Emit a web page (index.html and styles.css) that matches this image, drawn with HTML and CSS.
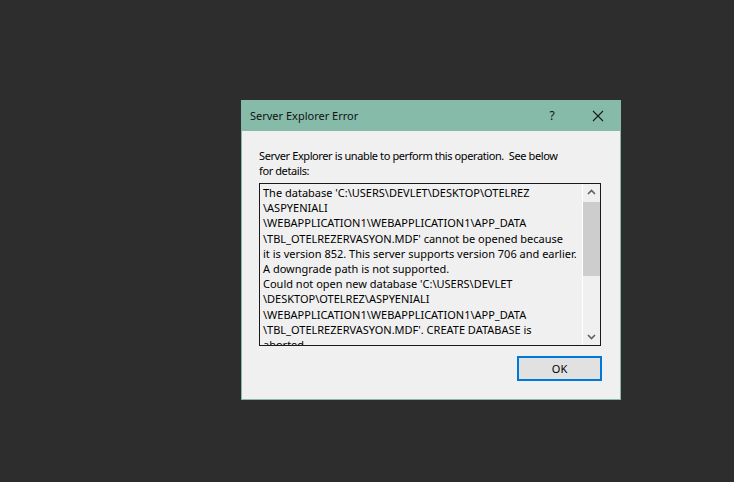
FILE: index.html
```html
<!DOCTYPE html>
<html>
<head>
<meta charset="utf-8">
<link rel="stylesheet" href="styles.css">
</head>
<body>
<div class="desk">
  <div class="dialog">
    <div class="titlebar">
      <span class="title">Server Explorer Error</span>
      <span class="help">?</span>
      <svg class="close" width="12" height="12" viewBox="0 0 12 12"><path d="M1 1L11 11M11 1L1 11" stroke="#1a1a1a" stroke-width="1.1" fill="none"/></svg>
    </div>
    <div class="body">
      <div class="msg">
        <div>Server Explorer is unable to perform this operation.&nbsp; See below</div>
        <div>for details:</div>
      </div>
      <div class="box">
        <div class="text">
          <div>The database 'C:\USERS\DEVLET\DESKTOP\OTELREZ</div>
          <div>\ASPYENIALI</div>
          <div>\WEBAPPLICATION1\WEBAPPLICATION1\APP_DATA</div>
          <div>\TBL_OTELREZERVASYON.MDF' cannot be opened because</div>
          <div>it is version 852. This server supports version 706 and earlier.</div>
          <div>A downgrade path is not supported.</div>
          <div>Could not open new database 'C:\USERS\DEVLET</div>
          <div>\DESKTOP\OTELREZ\ASPYENIALI</div>
          <div>\WEBAPPLICATION1\WEBAPPLICATION1\APP_DATA</div>
          <div>\TBL_OTELREZERVASYON.MDF'. CREATE DATABASE is</div>
          <div>aborted.</div>
        </div>
        <div class="scroll">
          <svg class="arr" width="17" height="17" viewBox="0 0 17 17"><path d="M5 10L8.5 6.5L12 10" stroke="#606060" stroke-width="1.6" fill="none"/></svg>
          <div class="track"><div class="thumb"></div></div>
          <svg class="arr" width="17" height="17" viewBox="0 0 17 17"><path d="M5 7L8.5 10.5L12 7" stroke="#606060" stroke-width="1.6" fill="none"/></svg>
        </div>
      </div>
      <div class="actions">
        <button class="ok">OK</button>
      </div>
    </div>
  </div>
</div>
</body>
</html>
```

FILE: styles.css
```css
html, body {
  margin: 0;
  padding: 0;
  background: #2d2d2d;
}
.desk {
  width: 734px;
  height: 482px;
  padding: 100px 0 0 241px;
  box-sizing: border-box;
  font-family: "Noto Sans", "DejaVu Sans", sans-serif;
  font-size: 11px;
  color: #000;
}
.dialog {
  width: 380px;
  height: 300px;
  box-sizing: border-box;
  border: 1px solid #86b9a8;
  border-top: none;
  background: #f0f0f0;
  display: flex;
  flex-direction: column;
}
.titlebar {
  height: 31px;
  background: #87bba9;
  display: flex;
  align-items: center;
  margin: 0 -1px;
  padding: 0 0 0 9px;
}
.title {
  flex: 1;
  font-size: 11px;
  color: #111;
}
.help {
  width: 46px;
  text-align: center;
  font-size: 12px;
  color: #111;
}
.close {
  margin: 0 17px 0 17px;
}
.body {
  padding: 17px 19px 0 17px;
}
.msg {
  line-height: 15px;
  white-space: nowrap;
  height: 35px;
  letter-spacing: -0.4px;
}
.box {
  border: 1px solid #1a1a1a;
  height: 161px;
  display: flex;
  background: #f0f0f0;
}
.text {
  flex: 1;
  padding: 1px 0 0 3px;
  line-height: 15.2px;
  white-space: nowrap;
  overflow: hidden;
}
.scroll {
  width: 17px;
  border-left: 1px solid #ffffff;
  display: flex;
  flex-direction: column;
  background: #f0f0f0;
}
.arr {
  display: block;
  flex: none;
}
.track {
  flex: 1;
  padding-top: 1px;
}
.thumb {
  height: 74px;
  background: #cdcdcd;
}
.actions {
  display: flex;
  justify-content: flex-end;
  padding-top: 10px;
}
.ok {
  width: 85px;
  height: 25px;
  box-sizing: border-box;
  border: 2px solid #0078d7;
  background: #e1e1e1;
  font-family: "Noto Sans", "DejaVu Sans", sans-serif;
  font-size: 11px;
  color: #000;
  padding: 0;
  margin-right: -1px;
}
```
